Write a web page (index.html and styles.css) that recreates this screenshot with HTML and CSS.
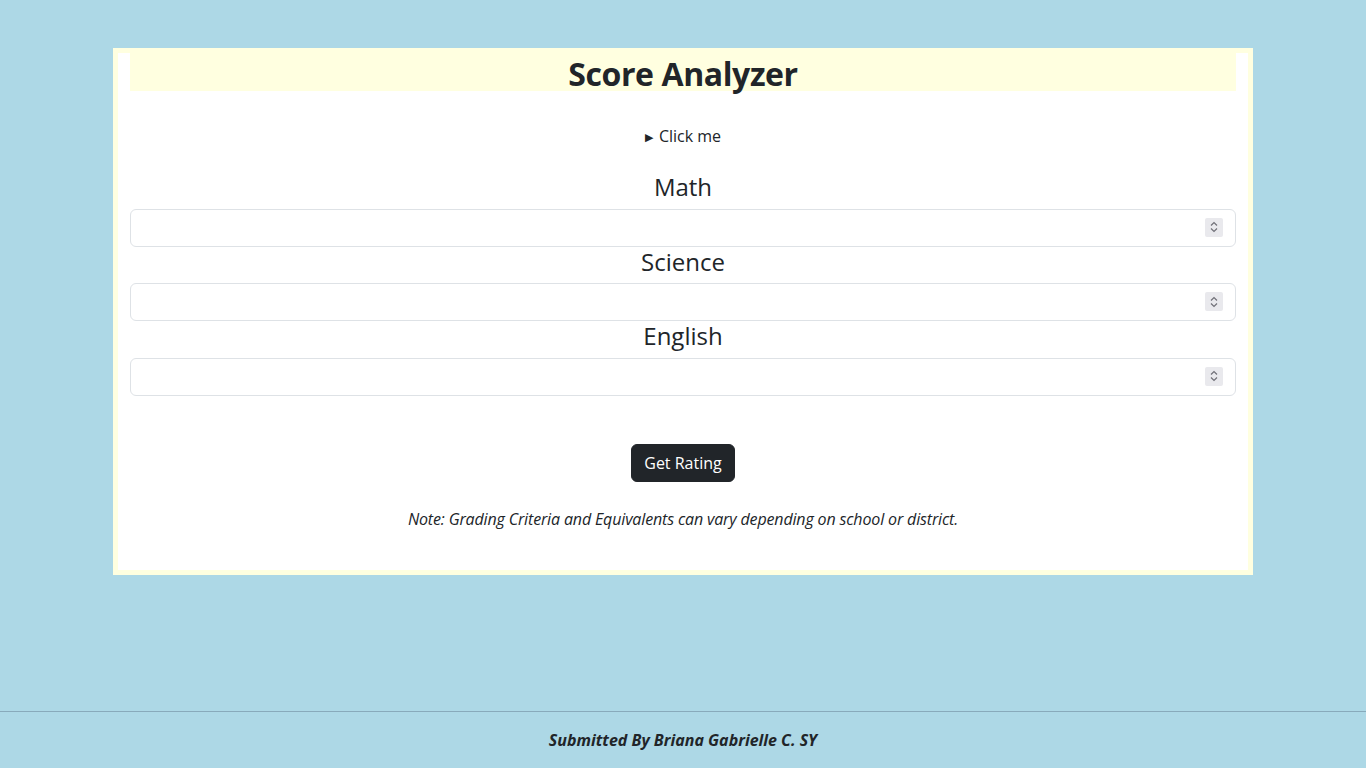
FILE: index.html
```html
<!DOCTYPE html>
<html lang="en">
<head>
<meta charset="utf-8">
<title>Score Analyzer</title>
<link rel="stylesheet" href="styles.css">
</head>
<body>
<main class="card">
  <h2 class="title">Score Analyzer</h2>
  <details class="info">
    <summary>Click me</summary>
  </details>
  <form class="form">
    <label class="field-label" for="math">Math</label>
    <div class="field"><input class="field-input" type="number" id="math"><span class="spin"><svg width="10" height="14" viewBox="0 0 10 14"><path d="M2 5.5 L5 2.5 L8 5.5 M2 8.5 L5 11.5 L8 8.5" fill="none" stroke="#707078" stroke-width="1.2"/></svg></span></div>
    <label class="field-label" for="science">Science</label>
    <div class="field"><input class="field-input" type="number" id="science"><span class="spin"><svg width="10" height="14" viewBox="0 0 10 14"><path d="M2 5.5 L5 2.5 L8 5.5 M2 8.5 L5 11.5 L8 8.5" fill="none" stroke="#707078" stroke-width="1.2"/></svg></span></div>
    <label class="field-label" for="english">English</label>
    <div class="field"><input class="field-input" type="number" id="english"><span class="spin"><svg width="10" height="14" viewBox="0 0 10 14"><path d="M2 5.5 L5 2.5 L8 5.5 M2 8.5 L5 11.5 L8 8.5" fill="none" stroke="#707078" stroke-width="1.2"/></svg></span></div>
    <div class="actions"><button type="button" class="btn">Get Rating</button></div>
  </form>
  <p class="note">Note: Grading Criteria and Equivalents can vary depending on school or district.</p>
</main>
<footer class="footer">
  <p class="credit">Submitted By Briana Gabrielle C. SY</p>
</footer>
</body>
</html>
```

FILE: styles.css
```css
* { box-sizing: border-box; }
html, body { height: 100%; }
body {
  margin: 0;
  background: #add8e6;
  color: #212529;
  font-family: "Open Sans", "Noto Sans", sans-serif;
  font-size: 16px;
  line-height: 24px;
  display: flex;
  flex-direction: column;
}
.card {
  width: 1140px;
  margin: 48px auto 0;
  background: #fff;
  border: 5px solid #ffffe0;
  padding: 0 12px 39px;
}
.title {
  margin: 0 0 8px;
  background: #ffffe0;
  text-align: center;
  font-size: 32px;
  line-height: 38px;
  font-weight: 700;
  letter-spacing: -0.4px;
  padding-top: 2px;
  height: 38px;
}
.info {
  margin-top: 33px;
  text-align: center;
}
.info summary {
  cursor: pointer;
  list-style: none;
}
.info summary::before {
  content: "\25B6";
  font-size: 11px;
  margin-right: 6px;
  vertical-align: 1px;
}
.form { margin-top: 23px; }
.field-label {
  display: block;
  text-align: center;
  font-size: 24px;
  line-height: 29.5px;
  padding-bottom: 7px;
}
.field { position: relative; }
.field-input {
  display: block;
  width: 100%;
  height: 38px;
  border: 1px solid #dee2e6;
  border-radius: 6px;
  padding: 6px 12px;
  font: inherit;
  background: #fff;
}
.field-input::-webkit-inner-spin-button,
.field-input::-webkit-outer-spin-button { -webkit-appearance: none; margin: 0; }
.spin {
  position: absolute;
  right: 13px;
  top: 9px;
  width: 18px;
  height: 19px;
  background: #e9e9ed;
  border-radius: 2px;
  display: flex;
  align-items: center;
  justify-content: center;
}
.actions {
  margin-top: 48px;
  text-align: center;
}
.btn {
  background: #212529;
  color: #fff;
  border: 1px solid #212529;
  border-radius: 6px;
  padding: 6px 12px;
  font: inherit;
  line-height: 24px;
  height: 38px;
}
.note {
  margin: 25px 0 0;
  text-align: center;
  font-style: italic;
  letter-spacing: -0.15px;
}
.footer {
  margin-top: auto;
  border-top: 1px solid #88aabb;
  padding: 16px 0;
  text-align: center;
}
.credit {
  margin: 0;
  font-weight: 700;
  font-style: italic;
}
```
